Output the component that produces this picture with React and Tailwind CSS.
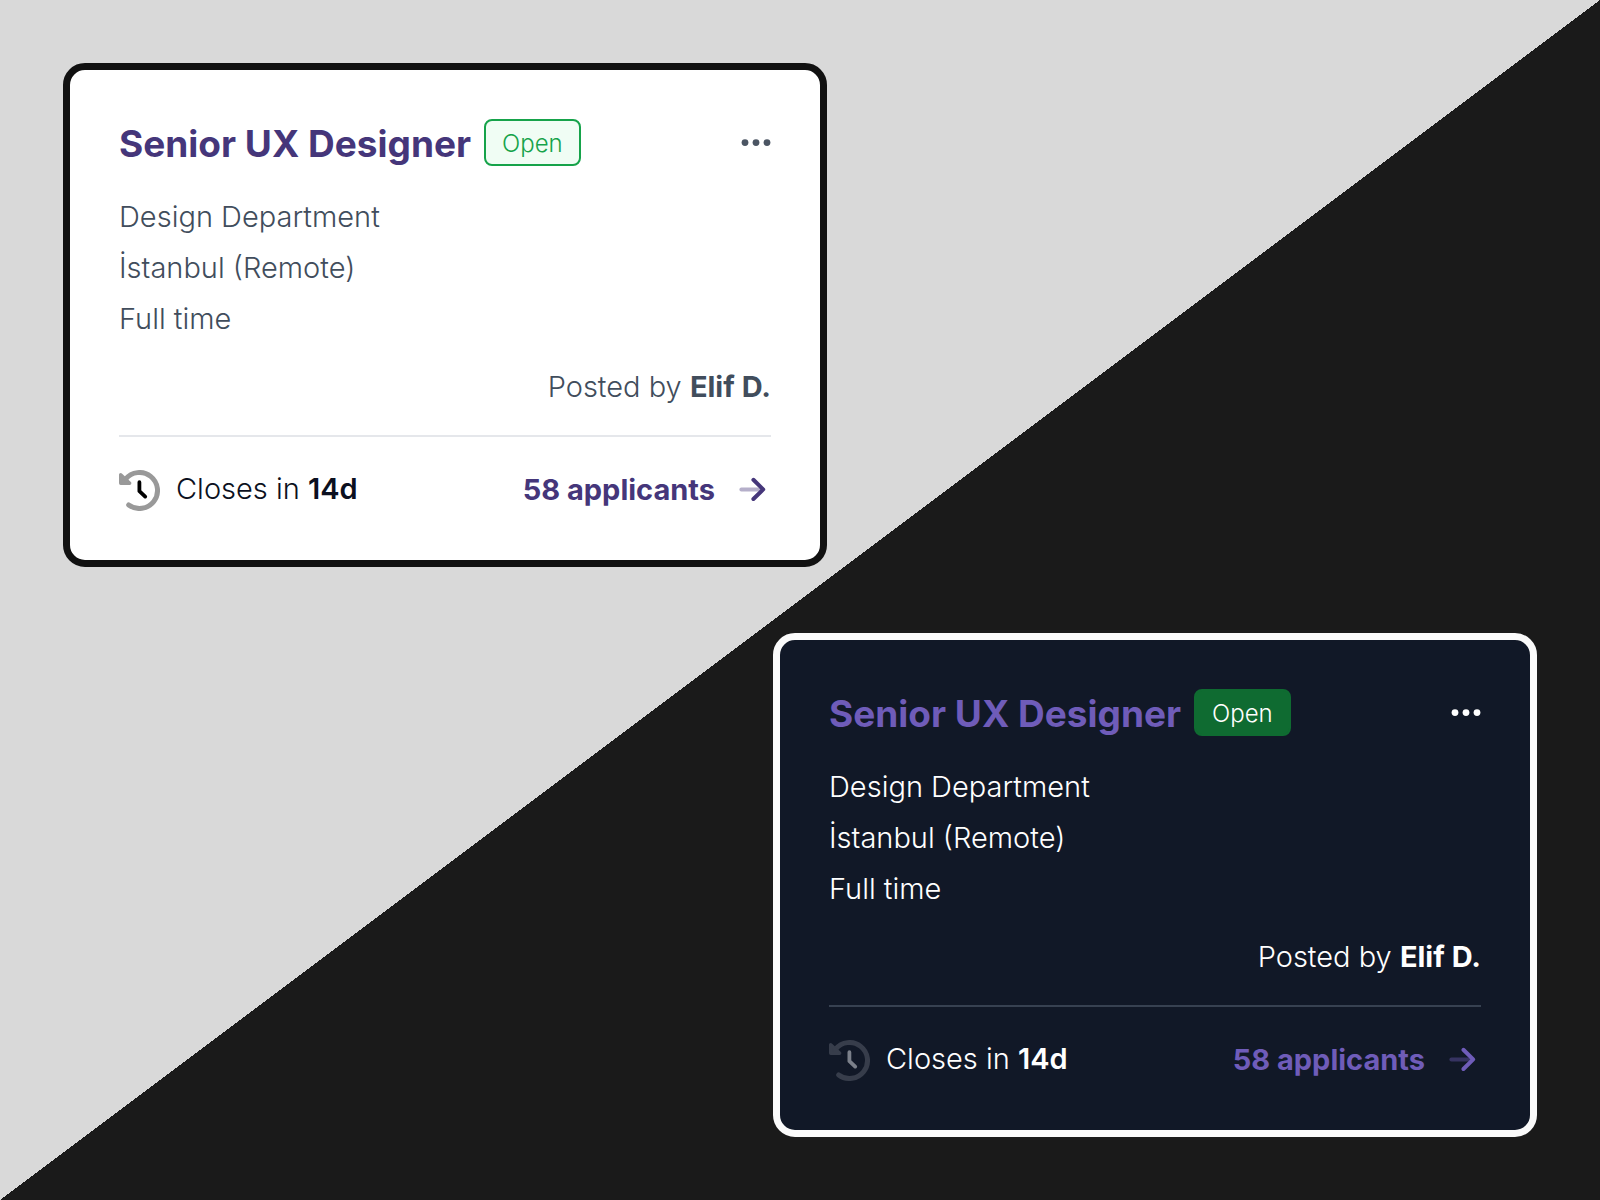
import React from "react";

/* Theme classes */
const themes = {
  light: {
    card: "border-[#111111] bg-white",
    accent: "text-[#45367a]",
    badge: "border-[#16a34a] bg-[#f0fdf4] text-[#16a34a]",
    menu: "text-[#4b5563]",
    body: "text-[#414d5c]",
    divider: "border-[#e5e7eb]",
    footer: "text-[#0b1020]",
    ring: "text-[#999999]",
    hand: "text-black",
  },
  dark: {
    card: "border-[#fafafa] bg-[#111827]",
    accent: "text-[#6f5cb9]",
    badge: "border-[#0f6b31] bg-[#0f6b31] text-white",
    menu: "text-white",
    body: "text-white",
    divider: "border-[#374151]",
    footer: "text-white",
    ring: "text-[#373d4b]",
    hand: "text-[#7b808a]",
  },
};

const job = {
  title: "Senior UX Designer",
  status: "Open",
  details: ["Design Department", "İstanbul (Remote)", "Full time"],
  postedBy: "Elif D.",
  closesIn: "14d",
  applicants: 58,
};

function DotsIcon() {
  return (
    <svg width="30" height="8" viewBox="0 0 30 8" fill="currentColor">
      <circle cx="4" cy="3.6" r="3.4" />
      <circle cx="15" cy="3.6" r="3.4" />
      <circle cx="26" cy="3.6" r="3.4" />
    </svg>
  );
}

function HistoryIcon({ ring, hand }) {
  return (
    <svg
      width="41"
      height="41"
      viewBox="0 0 41 41"
      fill="none"
      stroke="currentColor"
      strokeLinecap="round"
      strokeLinejoin="round"
      className="shrink-0"
    >
      <g className={ring}>
        <path d="M9.7 34.9A18 18 0 1 0 6.5 9.2" strokeWidth="5" />
        <path
          d="M1.7 4.7V13.3H10.7Z"
          fill="currentColor"
          strokeWidth="3.4"
        />
      </g>
      <path
        d="M20.4 12.2V21.2L26.2 26.6"
        strokeWidth="3.8"
        className={hand}
      />
    </svg>
  );
}

function ArrowIcon() {
  return (
    <svg
      width="36"
      height="36"
      viewBox="0 0 36 36"
      fill="none"
      stroke="currentColor"
      strokeWidth="4"
      strokeLinecap="round"
      strokeLinejoin="round"
      className="shrink-0"
    >
      <path d="M6.4 17.4H25" opacity="0.4" />
      <path d="M18.4 7.8L28.2 17.4L18.4 27" />
    </svg>
  );
}

function JobCard({ theme }) {
  const styles = themes[theme];

  return (
    <article
      className={`w-full max-w-[764px] rounded-[22px] border-[7px] p-[49px] ${styles.card}`}
    >
      {/* Header */}
      <header className="flex items-start justify-between">
        <div className="flex items-start gap-[13px]">
          <h2 className={`text-[37px] leading-[49px] font-bold ${styles.accent}`}>
            {job.title}
          </h2>
          <span
            className={`h-[47px] rounded-lg border-2 px-4 text-[24px] leading-[45px] font-light ${styles.badge}`}
          >
            {job.status}
          </span>
        </div>
        <button
          type="button"
          aria-label="More options"
          className={`flex h-[47px] items-center ${styles.menu}`}
        >
          <DotsIcon />
        </button>
      </header>

      {/* Details */}
      <ul className={`mt-[23px] text-[29px] leading-[51px] font-light ${styles.body}`}>
        {job.details.map((detail) => (
          <li key={detail}>{detail}</li>
        ))}
      </ul>

      <p
        className={`mt-[17px] text-right text-[29px] leading-[51px] font-light ${styles.body}`}
      >
        Posted by <strong className="font-bold">{job.postedBy}</strong>
      </p>

      <hr className={`mt-[23px] border-t-2 ${styles.divider}`} />

      {/* Footer */}
      <footer className="mt-[33px] flex items-start justify-between">
        <div className="flex items-start gap-4">
          <HistoryIcon ring={styles.ring} hand={styles.hand} />
          <p className={`text-[29px] leading-[37px] font-light ${styles.footer}`}>
            Closes in <strong className="font-semibold">{job.closesIn}</strong>
          </p>
        </div>
        <a
          href="#applicants"
          className={`flex items-center gap-5 text-[29px] leading-[39px] font-bold ${styles.accent}`}
        >
          {job.applicants} applicants
          <ArrowIcon />
        </a>
      </footer>
    </article>
  );
}

function App() {
  return (
    <main className="flex min-h-screen flex-col justify-between bg-[linear-gradient(to_bottom_right,#d9d9d9_50%,#1a1a1a_50%)] p-[63px] font-['Inter',sans-serif]">
      <JobCard theme="light" />
      <div className="flex justify-end">
        <JobCard theme="dark" />
      </div>
    </main>
  );
}

export default App;
